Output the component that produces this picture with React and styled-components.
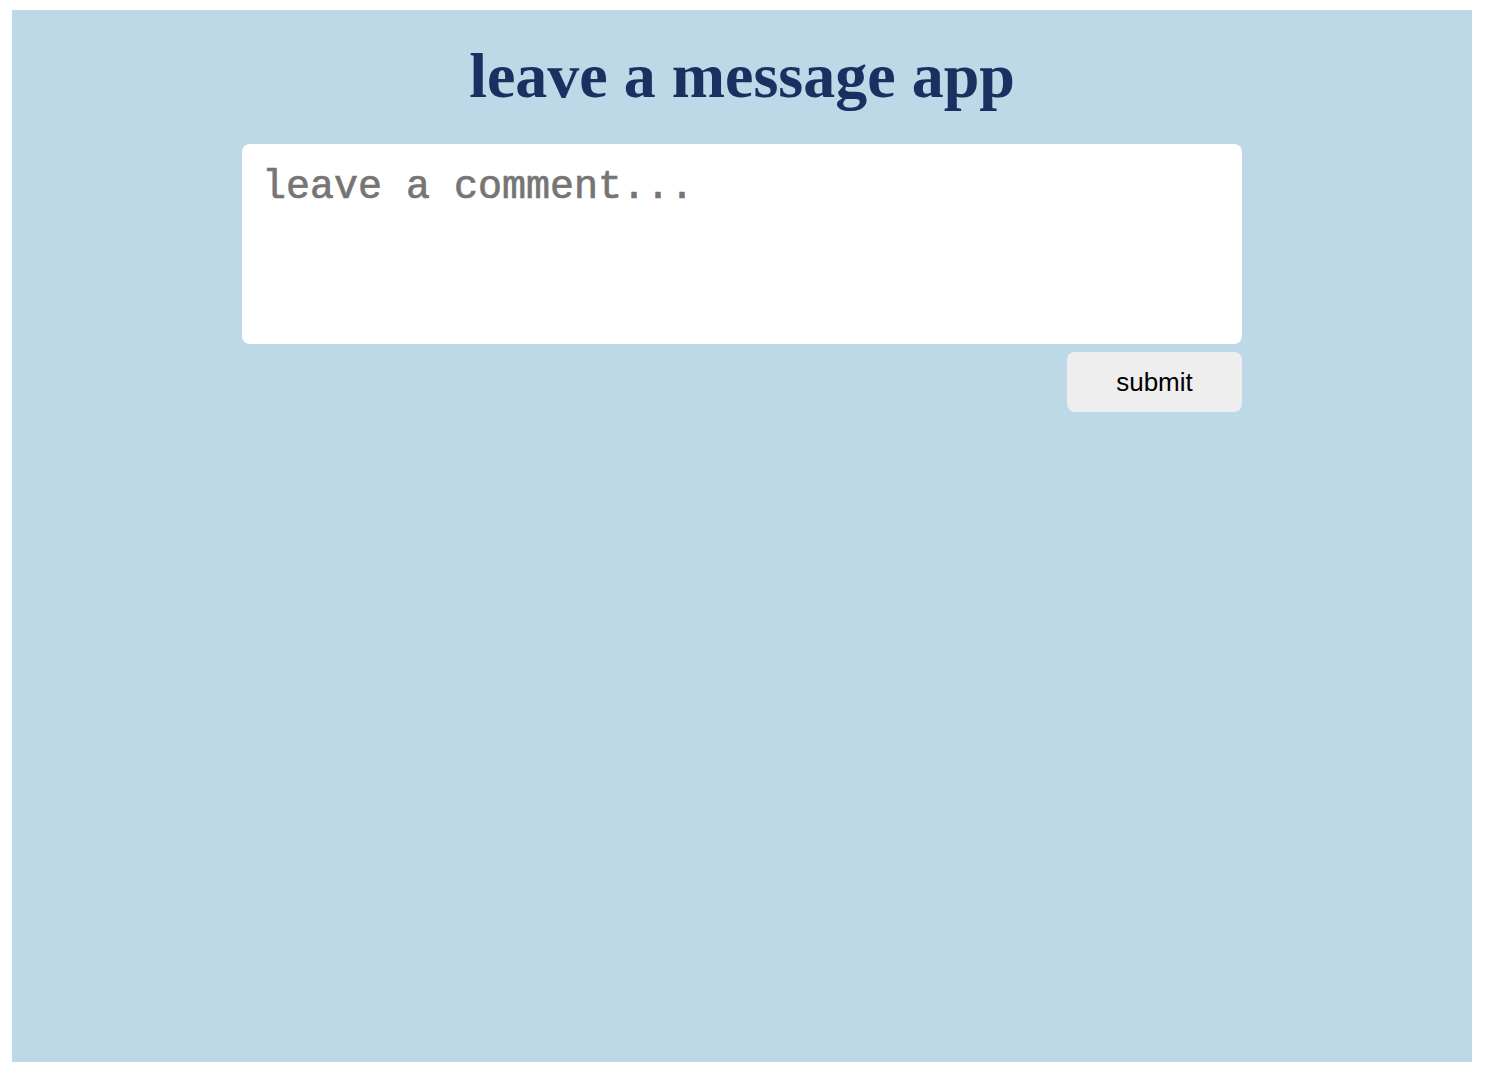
import React from 'react';
import styled, { createGlobalStyle } from 'styled-components';

const panelBg = 'rgb(189, 216, 230)';
const titleColor = 'rgb(27, 47, 96)';

const GlobalStyle = createGlobalStyle`
  html, body {
    margin: 0;
    padding: 0;
    background: #fff;
  }

  body {
    padding: 10px 18px 18px 12px;
  }
`;

const Panel = styled.div`
  display: flex;
  flex-direction: column;
  align-items: center;
  height: 1052px;
  background: ${panelBg};
  box-sizing: border-box;
`;

const Title = styled.h1`
  margin: 0;
  padding-top: 26px;
  height: 134px;
  box-sizing: border-box;
  font-family: 'Liberation Serif', 'Times New Roman', serif;
  font-weight: bold;
  font-size: 64px;
  line-height: 80px;
  color: ${titleColor};
`;

const Form = styled.form`
  display: flex;
  flex-direction: column;
  align-items: flex-end;
  gap: 8px;
  width: 1000px;
`;

const CommentBox = styled.textarea`
  width: 100%;
  height: 200px;
  padding: 21px 20px 19px;
  box-sizing: border-box;
  border: none;
  border-radius: 8px;
  background: #fff;
  resize: none;
  outline: none;
  font-family: 'Liberation Mono', 'Courier New', monospace;
  font-size: 40px;
  color: #222;
  -webkit-text-stroke: 0.7px currentColor;

  &::placeholder {
    color: rgb(117, 117, 117);
  }
`;

const SubmitButton = styled.button`
  width: 175px;
  height: 60px;
  border: none;
  border-radius: 8px;
  background: rgb(238, 238, 238);
  font-family: 'Liberation Sans', Arial, sans-serif;
  font-size: 26px;
  color: #000;
  cursor: pointer;
`;

const App = () => (
  <>
    <GlobalStyle />
    <Panel>
      <Title>leave a message app</Title>
      <Form onSubmit={(e) => e.preventDefault()}>
        <CommentBox placeholder='leave a comment...' />
        <SubmitButton type='submit'>submit</SubmitButton>
      </Form>
    </Panel>
  </>
);

export default App;
